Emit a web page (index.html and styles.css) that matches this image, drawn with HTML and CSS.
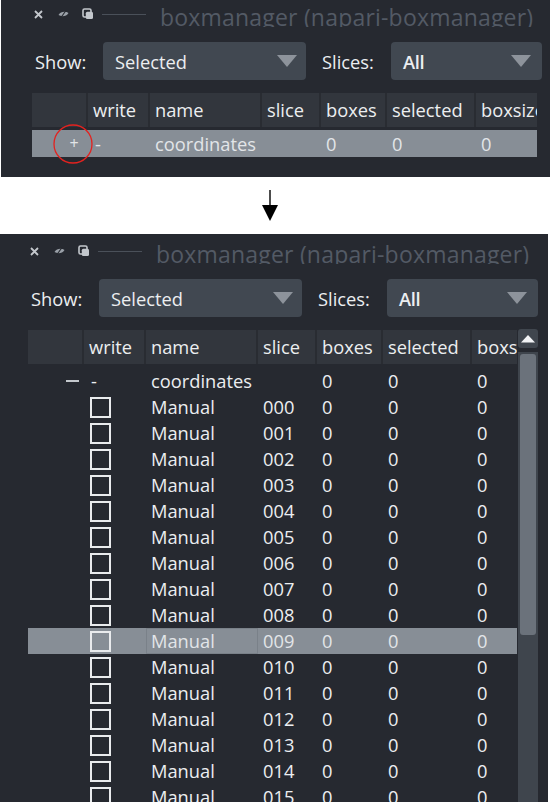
FILE: index.html
```html
<!DOCTYPE html>
<html>
<head>
<meta charset="utf-8">
<link rel="stylesheet" href="styles.css">
</head>
<body>
<div class="page">
  <section class="panel panel-a">
    <div class="titlebar">
      <svg class="ic ic-x" width="9" height="9" viewBox="0 0 9 9"><path d="M1 1L8 8M8 1L1 8" stroke="#c3c7cc" stroke-width="1.8"/></svg>
      <svg class="ic ic-eye" width="11" height="8" viewBox="0 0 11 8"><path d="M0.5 5C2.5 1.5 7.5 1 10.5 3C8.5 6.5 3.5 7 0.5 5Z" fill="#9aa0a8"/><path d="M3.2 7.2L7.8 0.8" stroke="#262930" stroke-width="1.1"/></svg>
      <svg class="ic ic-float" width="12" height="12" viewBox="0 0 12 12"><rect x="1" y="1" width="8" height="8" rx="1.5" fill="none" stroke="#c3c7cc" stroke-width="1.6"/><rect x="3.8" y="3.8" width="7.2" height="7.2" rx="1.5" fill="#c3c7cc"/></svg>
      <span class="tb-line"></span>
      <span class="tb-title">boxmanager (napari-boxmanager)</span>
    </div>
    <div class="controls">
      <span class="lbl lbl-show">Show:</span>
      <div class="combo combo-show"><span>Selected</span><span class="caret"></span></div>
      <span class="lbl lbl-slices">Slices:</span>
      <div class="combo combo-slices"><span class="combo-all">All</span><span class="caret"></span></div>
    </div>
    <div class="tablearea">
      <div class="table">
        <div class="thead cols">
          <div class="th"></div><div class="th">write</div><div class="th">name</div><div class="th">slice</div><div class="th">boxes</div><div class="th">selected</div><div class="th th-last">boxsize</div>
        </div>
        <div class="tbody">
          <div class="tr cols is-sel">
            <div class="td td-tree"><span class="plus">+</span></div><div class="td td-dash">-</div><div class="td">coordinates</div><div class="td"></div><div class="td">0</div><div class="td">0</div><div class="td">0</div>
          </div>
        </div>
      </div>
    </div>
    <svg class="ring" width="42" height="42" viewBox="0 0 42 42"><circle cx="21" cy="21" r="19" fill="none" stroke="#e3221f" stroke-width="1.3"/></svg>
  </section>

  <div class="connector">
    <svg width="16" height="32" viewBox="0 0 16 32"><path d="M8 0V17" stroke="#000" stroke-width="1.4"/><path d="M0 15H16L8 31Z" fill="#000"/></svg>
  </div>

  <section class="panel panel-b">
    <div class="titlebar">
      <svg class="ic ic-x" width="9" height="9" viewBox="0 0 9 9"><path d="M1 1L8 8M8 1L1 8" stroke="#c3c7cc" stroke-width="1.8"/></svg>
      <svg class="ic ic-eye" width="11" height="8" viewBox="0 0 11 8"><path d="M0.5 5C2.5 1.5 7.5 1 10.5 3C8.5 6.5 3.5 7 0.5 5Z" fill="#9aa0a8"/><path d="M3.2 7.2L7.8 0.8" stroke="#262930" stroke-width="1.1"/></svg>
      <svg class="ic ic-float" width="12" height="12" viewBox="0 0 12 12"><rect x="1" y="1" width="8" height="8" rx="1.5" fill="none" stroke="#c3c7cc" stroke-width="1.6"/><rect x="3.8" y="3.8" width="7.2" height="7.2" rx="1.5" fill="#c3c7cc"/></svg>
      <span class="tb-line"></span>
      <span class="tb-title">boxmanager (napari-boxmanager)</span>
    </div>
    <div class="controls">
      <span class="lbl lbl-show">Show:</span>
      <div class="combo combo-show"><span>Selected</span><span class="caret"></span></div>
      <span class="lbl lbl-slices">Slices:</span>
      <div class="combo combo-slices"><span class="combo-all">All</span><span class="caret"></span></div>
    </div>
    <div class="tablearea">
      <div class="table">
        <div class="thead cols">
          <div class="th"></div><div class="th">write</div><div class="th">name</div><div class="th">slice</div><div class="th">boxes</div><div class="th">selected</div><div class="th th-last">boxsize</div>
        </div>
        <div class="tbody">
          <div class="tr cols">
            <div class="td td-tree"><span class="minus"></span></div><div class="td td-dash">-</div><div class="td">coordinates</div><div class="td"></div><div class="td">0</div><div class="td">0</div><div class="td">0</div>
          </div>
          <div class="tr cols"><div class="td"></div><div class="td"><span class="chk"></span></div><div class="td">Manual</div><div class="td">000</div><div class="td">0</div><div class="td">0</div><div class="td">0</div></div>
          <div class="tr cols"><div class="td"></div><div class="td"><span class="chk"></span></div><div class="td">Manual</div><div class="td">001</div><div class="td">0</div><div class="td">0</div><div class="td">0</div></div>
          <div class="tr cols"><div class="td"></div><div class="td"><span class="chk"></span></div><div class="td">Manual</div><div class="td">002</div><div class="td">0</div><div class="td">0</div><div class="td">0</div></div>
          <div class="tr cols"><div class="td"></div><div class="td"><span class="chk"></span></div><div class="td">Manual</div><div class="td">003</div><div class="td">0</div><div class="td">0</div><div class="td">0</div></div>
          <div class="tr cols"><div class="td"></div><div class="td"><span class="chk"></span></div><div class="td">Manual</div><div class="td">004</div><div class="td">0</div><div class="td">0</div><div class="td">0</div></div>
          <div class="tr cols"><div class="td"></div><div class="td"><span class="chk"></span></div><div class="td">Manual</div><div class="td">005</div><div class="td">0</div><div class="td">0</div><div class="td">0</div></div>
          <div class="tr cols"><div class="td"></div><div class="td"><span class="chk"></span></div><div class="td">Manual</div><div class="td">006</div><div class="td">0</div><div class="td">0</div><div class="td">0</div></div>
          <div class="tr cols"><div class="td"></div><div class="td"><span class="chk"></span></div><div class="td">Manual</div><div class="td">007</div><div class="td">0</div><div class="td">0</div><div class="td">0</div></div>
          <div class="tr cols"><div class="td"></div><div class="td"><span class="chk"></span></div><div class="td">Manual</div><div class="td">008</div><div class="td">0</div><div class="td">0</div><div class="td">0</div></div>
          <div class="tr cols is-sel"><div class="td"></div><div class="td"><span class="chk"></span></div><div class="td td-focus">Manual</div><div class="td">009</div><div class="td">0</div><div class="td">0</div><div class="td">0</div></div>
          <div class="tr cols"><div class="td"></div><div class="td"><span class="chk"></span></div><div class="td">Manual</div><div class="td">010</div><div class="td">0</div><div class="td">0</div><div class="td">0</div></div>
          <div class="tr cols"><div class="td"></div><div class="td"><span class="chk"></span></div><div class="td">Manual</div><div class="td">011</div><div class="td">0</div><div class="td">0</div><div class="td">0</div></div>
          <div class="tr cols"><div class="td"></div><div class="td"><span class="chk"></span></div><div class="td">Manual</div><div class="td">012</div><div class="td">0</div><div class="td">0</div><div class="td">0</div></div>
          <div class="tr cols"><div class="td"></div><div class="td"><span class="chk"></span></div><div class="td">Manual</div><div class="td">013</div><div class="td">0</div><div class="td">0</div><div class="td">0</div></div>
          <div class="tr cols"><div class="td"></div><div class="td"><span class="chk"></span></div><div class="td">Manual</div><div class="td">014</div><div class="td">0</div><div class="td">0</div><div class="td">0</div></div>
          <div class="tr cols"><div class="td"></div><div class="td"><span class="chk"></span></div><div class="td">Manual</div><div class="td">015</div><div class="td">0</div><div class="td">0</div><div class="td">0</div></div>
          <div class="tr cols"><div class="td"></div><div class="td"><span class="chk"></span></div><div class="td">Manual</div><div class="td">016</div><div class="td">0</div><div class="td">0</div><div class="td">0</div></div>
        </div>
      </div>
      <div class="scrollbar">
        <div class="sb-up"><svg width="14" height="8" viewBox="0 0 14 8"><path d="M0 7.5H14L7 0Z" fill="#f2f3f5"/></svg></div>
        <div class="sb-track"><div class="sb-handle"></div></div>
      </div>
    </div>
  </section>
</div>
</body>
</html>
```
FILE: styles.css
```css
* { box-sizing: border-box; }
html, body { margin: 0; padding: 0; background: #ffffff; }
body {
  font-family: "Open Sans", "Noto Sans", "DejaVu Sans", sans-serif;
  width: 552px;
  height: 802px;
  overflow: hidden;
}
.page { width: 552px; }

.panel {
  position: relative;
  background: #262930;
  overflow: hidden;
  color: #eceef0;
}
.panel-a {
  margin-left: 1px;
  width: 549px;
  height: 177px;
  padding-left: 31px;
}
.panel-b {
  width: 548px;
  height: 568px;
  padding-left: 28px;
  padding-top: 3px;
}

/* title bar */
.titlebar {
  display: flex;
  align-items: center;
  height: 28px;
  padding-left: 2px;
}
.ic { display: block; flex: none; }
.ic-eye { margin-left: 15px; }
.ic-float { margin-left: 13px; }
.tb-line {
  width: 44px;
  height: 1px;
  background: #4a5059;
  margin-left: 8px;
  flex: none;
}
.tb-title {
  align-self: flex-start;
  margin-left: 14px;
  height: 27px;
  overflow: hidden;
  padding-top: 3px;
  font-size: 23px;
  letter-spacing: 0.2px;
  line-height: 28px;
  color: #535a65;
  white-space: nowrap;
}

/* controls */
.controls {
  display: flex;
  align-items: center;
  margin-top: 14px;
  padding-left: 3px;
  height: 38px;
  font-size: 18.3px;
}
.lbl { flex: none; }
.lbl-show { width: 68px; }
.lbl-slices { width: 69px; margin-left: 16px; }
.combo {
  flex: none;
  height: 38px;
  background: #414851;
  border-radius: 4px;
  display: flex;
  align-items: center;
  justify-content: space-between;
  padding-left: 12px;
}
.combo-show { width: 203px; padding-right: 9px; }
.combo-slices { width: 151px; padding-right: 11px; }
.combo-all { font-weight: 600; letter-spacing: -0.3px; }
.caret {
  width: 0;
  height: 0;
  border-left: 10px solid transparent;
  border-right: 10px solid transparent;
  border-top: 12px solid #8d939b;
}

/* table */
.tablearea {
  display: flex;
  align-items: flex-start;
  margin-top: 13px;
}
.panel-a .table { width: 505px; }
.panel-b .table { width: 489px; }
.cols {
  display: grid;
  grid-template-columns: 56px 62px 112px 59px 66px 89px 1fr;
}
.thead {
  height: 34px;
  background: #32363d;
  font-size: 18.3px;
  line-height: 34px;
}
.th {
  padding-left: 5px;
  border-right: 2px solid #292c32;
  white-space: nowrap;
  overflow: hidden;
}
.th-last { border-right: none; }
.tbody { margin-top: 3px; }
.panel-b .tbody { margin-top: 4px; }
.tr {
  height: 26px;
  font-size: 18.3px;
  line-height: 26px;
}
.panel-a .tr { height: 27px; line-height: 27px; }
.td {
  padding-left: 5px;
  white-space: nowrap;
  overflow: hidden;
  display: flex;
  align-items: center;
}
.tr.is-sel { background: #878e96; color: #e2e5e8; }
.td-focus { box-shadow: inset 0 0 0 1px #7a8189; }
.td-tree { padding-left: 36px; }
.td-dash { padding-left: 7px; }
.minus {
  display: block;
  width: 13px;
  height: 2px;
  background: #c4c8cd;
  margin-left: 2px;
}
.plus {
  display: block;
  width: 14px;
  text-align: center;
  font-size: 16px;
  margin-left: -1px;
}
.chk {
  display: block;
  width: 21px;
  height: 21px;
  border: 2px solid #e9ebed;
  margin-left: 1px;
}

/* scrollbar */
.scrollbar {
  width: 20px;
  margin-left: 1px;
  margin-top: -1px;
  flex: none;
}
.sb-up {
  height: 19px;
  background: #40464e;
  border-radius: 3px;
  display: flex;
  align-items: center;
  justify-content: center;
}
.sb-track {
  margin-top: 4px;
  height: 460px;
  background: #3f454d;
  padding: 2px;
}
.sb-handle {
  height: 281px;
  background: #6b727b;
  border-radius: 3px;
}

/* annotations */
.ring {
  position: absolute;
  left: 51px;
  top: 123px;
}
.connector {
  height: 57px;
  padding-top: 13px;
  padding-left: 262px;
}
.connector svg { display: block; }
```
